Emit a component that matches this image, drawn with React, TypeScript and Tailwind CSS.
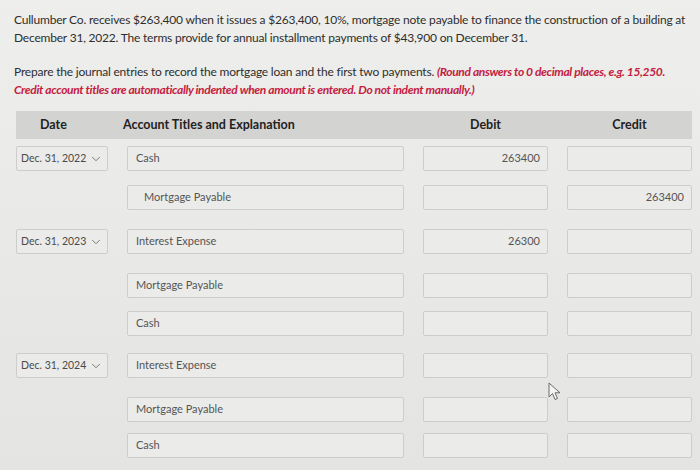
import { ChevronDown } from "lucide-react";

type Row = {
  date?: string;
  account: string;
  credit?: boolean;
  debit?: string;
  creditAmt?: string;
  mt: string;
};

const rows: Row[] = [
  { date: "Dec. 31, 2022", account: "Cash", debit: "263400", mt: "mt-[7px]" },
  { account: "Mortgage Payable", credit: true, creditAmt: "263400", mt: "mt-[14px]" },
  { date: "Dec. 31, 2023", account: "Interest Expense", debit: "26300", mt: "mt-[19px]" },
  { account: "Mortgage Payable", mt: "mt-[19px]" },
  { account: "Cash", mt: "mt-[13px]" },
  { date: "Dec. 31, 2024", account: "Interest Expense", mt: "mt-[17px]" },
  { account: "Mortgage Payable", mt: "mt-[19px]" },
  { account: "Cash", mt: "mt-[11px]" },
];

function Field({ value, indent }: { value?: string; indent?: boolean }) {
  return (
    <div
      className={`h-[25px] border border-[#cdcdcb] bg-[#ebebe9] rounded-[2px] flex items-center text-[11px] text-[#555] ${
        indent ? "pl-[16px]" : "pl-[8px]"
      }`}
    >
      {value}
    </div>
  );
}

function Amount({ value }: { value?: string }) {
  return (
    <div className="h-[25px] border border-[#cdcdcb] bg-[#ebebe9] rounded-[2px] flex items-center justify-end pr-[7px] text-[11px] text-[#555]">
      {value}
    </div>
  );
}

export default function App() {
  return (
    <div
      className="relative w-[700px] h-[470px] overflow-hidden bg-linear-to-b from-[#eeeeec] to-[#e4e4e2] text-[#2e2e2e]"
      style={{ fontFamily: "Lato, 'Open Sans', sans-serif" }}
    >
      <div className="px-[14px] pt-[11px] text-[12px] leading-[18px] tracking-[-0.2px]">
        <p>
          Cullumber Co. receives $263,400 when it issues a $263,400, 10%, mortgage note payable to finance the construction of a building at
          <br />
          December 31, 2022. The terms provide for annual installment payments of $43,900 on December 31.
        </p>
        <p className="mt-[16px]">
          Prepare the journal entries to record the mortgage loan and the first two payments.{" "}
          <span className="italic font-bold text-[#c4203f] tracking-[-0.35px]">
            (Round answers to 0 decimal places, e.g. 15,250.
            <br />
            Credit account titles are automatically indented when amount is entered. Do not indent manually.)
          </span>
        </p>
      </div>

      <div className="ml-[16px] w-[676px] mt-[12px]">
        <div className="h-[28px] bg-[#d3d3d1] grid grid-cols-[92px_277px_125px_125px] gap-x-[19px] items-center text-[12.5px] font-bold text-[#222]">
          <div className="pl-[24px]">Date</div>
          <div className="-ml-[4px]">Account Titles and Explanation</div>
          <div className="text-center">Debit</div>
          <div className="text-center">Credit</div>
        </div>

        {rows.map((r, i) => (
          <div key={i} className={`grid grid-cols-[92px_277px_125px_125px] gap-x-[19px] ${r.mt}`}>
            {r.date ? (
              <div className="h-[25px] border border-[#cdcdcb] bg-[#ebebe9] rounded-[2px] flex items-center justify-between pl-[4px] pr-[4px] text-[10.5px] text-[#4a4a4a]">
                <span>{r.date}</span>
                <ChevronDown size={14} strokeWidth={1.5} className="text-[#666]" />
              </div>
            ) : (
              <div />
            )}
            <Field value={r.account} indent={r.credit} />
            <Amount value={r.debit} />
            <Amount value={r.creditAmt} />
          </div>
        ))}
      </div>

      <svg className="absolute left-[548px] top-[382px]" width="14" height="20" viewBox="0 0 14 20">
        <path d="M1 1 L1 15 L4.5 11.5 L7 17.5 L9.5 16.5 L7 10.8 L12 10.8 Z" fill="#f4f4f2" stroke="#6a6a6a" strokeWidth="1" strokeLinejoin="round" />
      </svg>
    </div>
  );
}
